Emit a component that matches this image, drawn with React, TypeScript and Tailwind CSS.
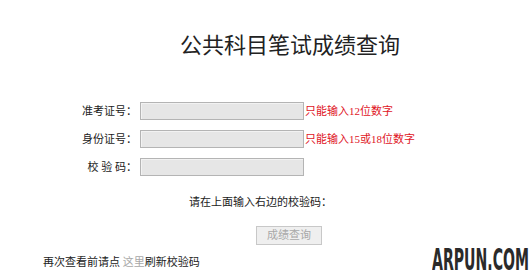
import React from "react";

const cjk = "font-['Liberation_Serif','Noto_Sans_CJK_SC',sans-serif]";

function Row({ label, hint }: { label: React.ReactNode; hint?: string }) {
  return (
    <div className="flex items-center h-[18px]">
      <div className="w-[140px] pr-[3px] text-right text-[11px] leading-[18px] text-[#222] whitespace-pre">{label}</div>
      <div className="w-[164px] h-[18px] border border-[#b4b4b4] bg-[#e6e6e6] shadow-[inset_1px_1px_0_#f2f2f2]" />
      {hint && <div className="ml-[1px] text-[11px] leading-[18px] text-[#e0141e] whitespace-nowrap">{hint}</div>}
    </div>
  );
}

export default function App() {
  return (
    <div className={`relative w-[530px] h-[280px] bg-white overflow-hidden ${cjk}`}>
      <div className="pt-[35px] pl-[180px] text-[22px] leading-[22px] text-[#222]">公共科目笔试成绩查询</div>
      <div className="mt-[45px] flex flex-col gap-[10px]">
        <Row label="准考证号：" hint="只能输入12位数字" />
        <Row label="身份证号：" hint="只能输入15或18位数字" />
        <Row label="校 验 码：" />
      </div>
      <div className="mt-[19px] pl-[189px] text-[11px] leading-[14px] text-[#222]">请在上面输入右边的校验码：</div>
      <div className="mt-[13px] pl-[256px]">
        <button className="w-[66px] h-[19px] border border-[#c8c8c8] bg-[#efefef] text-[11px] leading-[17px] text-[#a8a8a8]">成绩查询</button>
      </div>
      <div className="mt-[9px] pl-[43px] text-[11px] leading-[14px] text-[#222]">
        再次查看前请点 <span className="text-[#a8a8a8]">这里</span>刷新校验码
      </div>
      <div className="absolute left-[432px] top-[245px] whitespace-nowrap origin-top-left [transform:scaleX(0.47)] font-['DejaVu_Sans'] font-bold text-[30px] leading-[30px] text-[#2a2a2a]">ARPUN.COM</div>
    </div>
  );
}
